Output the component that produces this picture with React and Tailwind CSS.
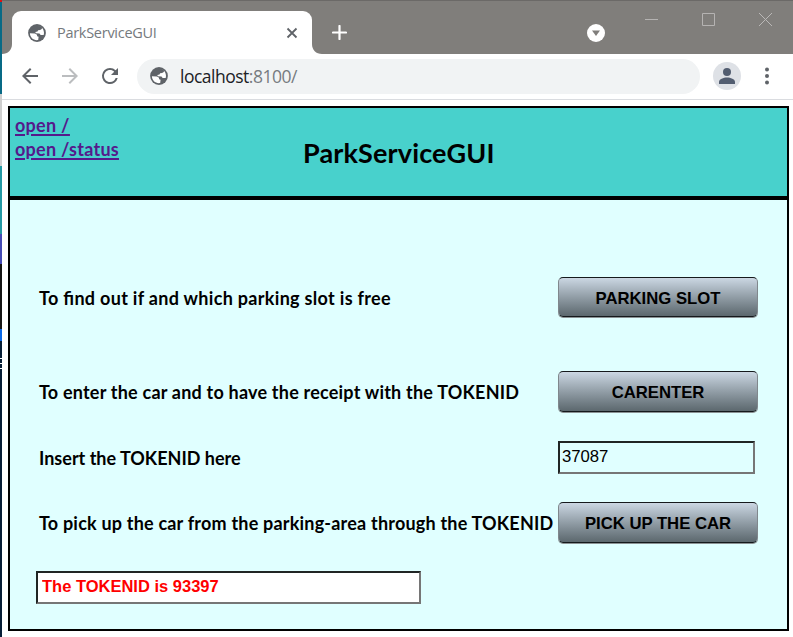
import React from 'react';

const Globe = () => (
  <svg width="18" height="18" viewBox="0 0 18 18" className="block shrink-0">
    <circle cx="9" cy="9" r="8.9" fill="#5f6368" />
    <path fill="#fff" d="M9.800 1.900c1.800.1 3.200.9 4.200 1.900l-.2 1.300-1.700.9-2 .3-.6 1.300-2.200.5.500 1.200 3.700.2 1.200 1.600 3-.1.300-1.900C16 5.200 13.800 2.300 9.800 1.900z" />
    <path fill="#fff" d="M1.900 9.300l5 .1 2.100 1.400.1 1.500 1.500.5-.4 3.300C5.500 16.800 2.100 13.500 1.900 9.300z" />
  </svg>
);

const Tool = ({ d, color = '#5f6368' }) => (
  <svg width="24" height="24" viewBox="0 0 24 24" className="block shrink-0">
    <path d={d} fill={color} />
  </svg>
);

function TabStrip() {
  return (
    <div className="flex h-[54px] shrink-0 border-t border-[#6b6967] bg-[#807e7b]">
      <div className="flex w-[10px] items-end">
        <svg width="10" height="10" viewBox="0 0 10 10"><path d="M10 0v10H0C6 10 10 6 10 0z" fill="#fff" /></svg>
      </div>
      <div className="mt-[10px] flex w-[300px] items-center rounded-t-[9px] bg-white pr-[14px] pl-4">
        <Globe />
        <span className="ml-[11px] flex-1 font-['Open_Sans','Noto_Sans',sans-serif] text-[14.500px] tracking-[-0.280px] text-[#75797d]">ParkServiceGUI</span>
        <svg width="12" height="12" viewBox="0 0 12 12"><path d="M1.500 1.500l9 9m0-9l-9 9" stroke="#5f6368" strokeWidth="1.800" /></svg>
      </div>
      <div className="flex w-[10px] items-end">
        <svg width="10" height="10" viewBox="0 0 10 10"><path d="M0 0v10h10C4 10 0 6 0 0z" fill="#fff" /></svg>
      </div>
      <svg width="15" height="15" viewBox="0 0 15 15" className="mt-6 ml-[10px]"><path d="M7.500 1v13M1 7.500h13" stroke="#fff" strokeWidth="2.200" strokeLinecap="round" /></svg>
      <div className="flex-1" />
      <svg width="18" height="18" viewBox="0 0 18 18" className="mt-[23px]">
        <circle cx="9" cy="9" r="9" fill="#fff" />
        <path d="M5 6.500h8L9 12z" fill="#807e7b" />
      </svg>
      <svg width="13" height="13" viewBox="0 0 13 13" className="mt-3 ml-10"><path d="M0 6.500h13" stroke="#b5b3b2" /></svg>
      <svg width="13" height="13" viewBox="0 0 13 13" className="mt-3 ml-11"><path d="M.5.500h12v12H.500z" fill="none" stroke="#b5b3b2" /></svg>
      <svg width="13" height="13" viewBox="0 0 13 13" className="mt-3 mr-[21px] ml-11"><path d="M0 0l13 13M13 0L0 13" stroke="#bab8b7" strokeWidth="1" /></svg>
    </div>
  );
}

function Toolbar() {
  return (
    <div className="flex h-[46px] shrink-0 items-center border-b border-[#dadce0] bg-white pb-px pl-[15.500px]">
      <Tool d="M20 11H7.830l5.590-5.590L12 4l-8 8 8 8 1.410-1.410L7.830 13H20v-2z" />
      <span className="w-4" />
      <Tool color="#bbbdbf" d="M12 4l-1.410 1.410L16.170 11H4v2h12.170l-5.580 5.590L12 20l8-8z" />
      <span className="w-4" />
      <Tool d="M17.650 6.350A7.958 7.958 0 0012 4a8 8 0 107.730 10h-2.080A5.990 5.990 0 0112 18c-3.310 0-6-2.690-6-6s2.690-6 6-6c1.660 0 3.140.690 4.220 1.780L13 11h7V4l-2.350 2.350z" />
      <div className="ml-[15.500px] flex h-[35px] w-[563px] items-center rounded-full bg-[#f1f3f4] pl-[13px]">
        <Globe />
        <span className="ml-3 pt-[2px] font-['Open_Sans','Noto_Sans',sans-serif] text-[17.500px] leading-none tracking-[-0.500px] text-[#777b80]">
          <span className="text-[#202124]">localhost</span>:8100/
        </span>
      </div>
      <svg width="28" height="28" viewBox="0 0 28 28" className="ml-[13px]">
        <circle cx="14" cy="14" r="14" fill="#dee1e6" />
        <circle cx="14" cy="10" r="4" fill="#525d70" />
        <path d="M6 22v-2c0-3 4.500-4.500 8-4.500s8 1.500 8 4.500v2z" fill="#525d70" />
      </svg>
      <svg width="4" height="18" viewBox="0 0 4 18" className="ml-6" fill="#5f6368">
        <circle cx="2" cy="2.500" r="2" /><circle cx="2" cy="9" r="2" /><circle cx="2" cy="15.500" r="2" />
      </svg>
    </div>
  );
}

const Label = ({ children, className = '' }) => (
  <span className={`w-[519px] shrink-0 text-[18px] leading-6 font-bold whitespace-nowrap ${className}`}>{children}</span>
);

const Button = ({ children, className }) => (
  <button className={`w-[200px] shrink-0 rounded-[5px] border border-t-[#15191c] border-r-[#80878c] border-b-[#15191c] border-l-[#80878c] bg-linear-to-b from-[#cbd7e3] to-[#5c686e] font-['Liberation_Sans',Arial,sans-serif] text-[16.700px] font-bold shadow-[0_1px_0_#8b9294] ${className}`}>
    {children}
  </button>
);

function Page() {
  return (
    <div className="mt-[6px] mr-1 ml-[6px] flex h-[525px] flex-col border-2 border-black bg-[#e0ffff] font-['Lato','Open_Sans',sans-serif] text-black">
      <header className="flex h-[92px] shrink-0 border-b-4 border-black bg-[#48d1cc]">
        <nav className="flex w-[293px] flex-col items-start pt-[5px] pl-[5px] text-[18px] leading-6 font-bold text-[#551a8b] underline decoration-2 underline-offset-2">
          <a className="tracking-[0.270px]">open /</a>
          <a className="tracking-[0.270px]">open /status</a>
        </nav>
        <h1 className="pt-[27px] text-[27px] leading-9 font-bold tracking-[0.140px]">ParkServiceGUI</h1>
      </header>
      <main className="pl-[29px]">
        <div className="mt-[77px] flex h-10 items-center"><Label className="pt-[2px] tracking-[0.310px] [font-feature-settings:'liga'_1]">To find out if and which parking slot is free</Label><Button className="h-10 pt-[3px]">PARKING SLOT</Button></div>
        <div className="mt-[54px] flex h-[41px] items-center"><Label className="tracking-[0.210px]">To enter the car and to have the receipt with the TOKENID</Label><Button className="h-[41px] pt-[2px]">CARENTER</Button></div>
        <div className="mt-[29px] flex h-[33px] items-center"><Label>Insert the TOKENID here</Label>
          <input readOnly defaultValue="37087" className="h-[33px] w-[197px] border-2 border-t-[#202524] border-r-[#767676] border-b-[#767676] border-l-[#202524] bg-transparent px-[2px] pb-[2px] font-['Liberation_Sans',Arial,sans-serif] text-[16.700px] outline-none" />
        </div>
        <div className="mt-7 flex h-[41px] items-center"><Label className="tracking-[0.200px]">To pick up the car from the parking-area through the TOKENID</Label><Button className="h-[41px] pt-[3px]">PICK UP THE CAR</Button></div>
        <input readOnly defaultValue="The TOKENID is 93397" className="mt-7 -ml-[3px] block h-[33px] w-[385px] border-2 border-t-[#202524] border-r-[#767676] border-b-[#767676] border-l-[#202524] bg-white px-1 pb-[2px] font-['Liberation_Sans',Arial,sans-serif] text-[16.500px] font-bold text-[#f00] outline-none" />
      </main>
    </div>
  );
}

export default function App() {
  return (
    <div className="flex h-[637px] w-[793px] overflow-hidden bg-white">
      <div className="flex w-[2px] shrink-0 flex-col">
        <i className="h-[2px] bg-[#e01010]" />
        <i className="h-[92px] bg-[#086a86]" />
        <i className="h-[72px] bg-[#cfcfcf]" />
        <i className="h-[68px] bg-[#2499a5]" />
        <i className="h-[30px] bg-[#454bb5]" />
        <i className="h-[65px] bg-[#151515]" />
        <i className="h-3 bg-[#0868e8]" />
        <i className="h-[17px] bg-[#061d36]" />
        <i className="h-px bg-white" />
        <i className="h-1 bg-[#061d36]" />
        <i className="h-px bg-white" />
        <i className="h-1 bg-[#061d36]" />
        <i className="h-px bg-white" />
        <i className="h-[268px] bg-[#061d36]" />
      </div>
      <div className="flex w-[791px] flex-col"><TabStrip /><Toolbar /><Page /></div>
    </div>
  );
}
